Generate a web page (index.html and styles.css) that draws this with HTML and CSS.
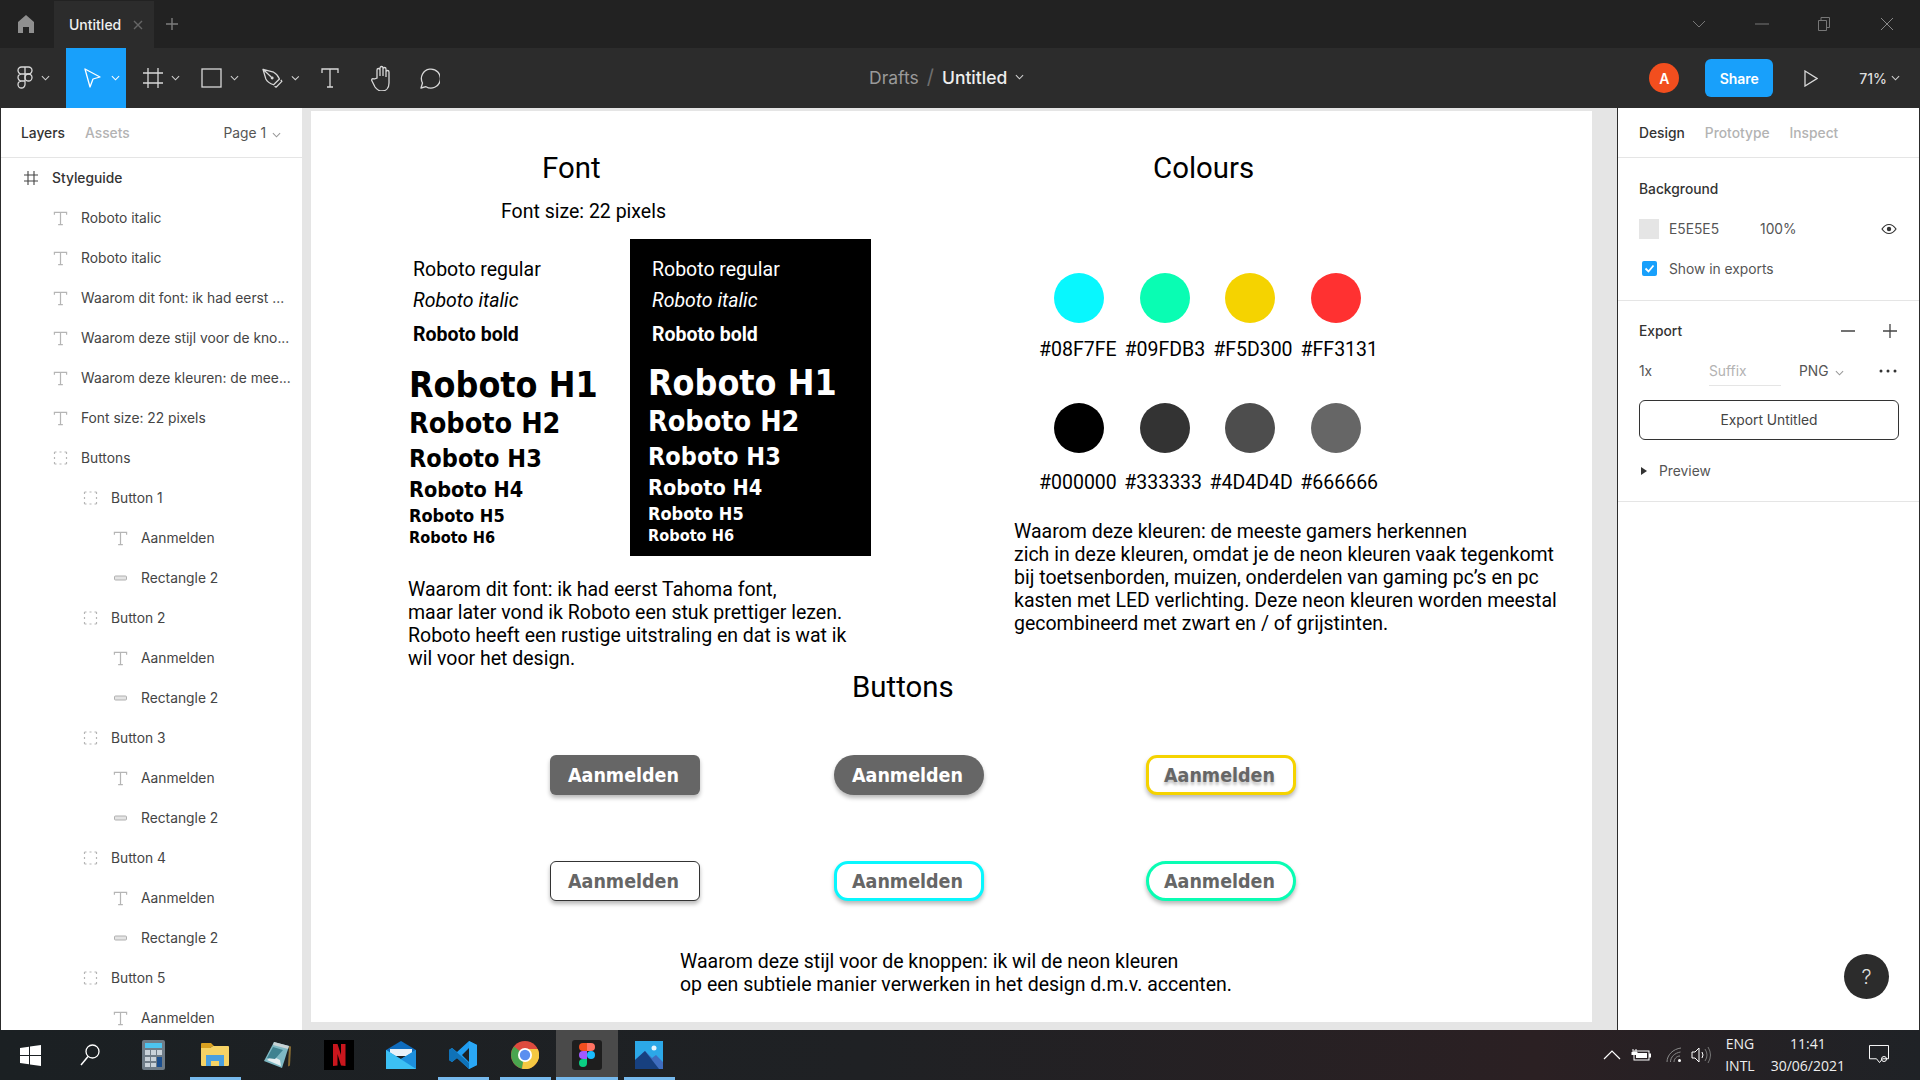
FILE: index.html
```html
<!DOCTYPE html>
<html lang="en">
<head>
    <meta charset="UTF-8">
    <title>Untitled - Figma</title>
    <link rel="stylesheet" href="styles.css">
</head>
<body>
    <svg class="defs" width="0" height="0">
        <symbol id="i-t" viewBox="0 0 16 16"><path d="M1.5 4V1.5h13V4M8 1.5v13M5.5 14.5h5" fill="none" stroke="#b5b5b5" stroke-width="1.3"/></symbol>
        <symbol id="i-group" viewBox="0 0 14 14"><path d="M1 1h2M6 1h2M11 1h2M1 13h2M6 13h2M11 13h2M1 1v2M1 6v2M1 11v2M13 1v2M13 6v2M13 11v2" fill="none" stroke="#b5b5b5" stroke-width="1.2"/></symbol>
        <symbol id="i-rect" viewBox="0 0 14 8"><rect x="1" y="2" width="12" height="4" rx="1" fill="#e4e4e4" stroke="#b0b0b0" stroke-width="1"/></symbol>
        <symbol id="i-chev" viewBox="0 0 10 6"><path d="M1 1l4 4 4-4" fill="none" stroke="currentColor" stroke-width="1.2"/></symbol>
    </svg>

    <header class="topbar">
        <svg class="home" width="18" height="20" viewBox="0 0 18 20"><path d="M9 1L1 8v11h5v-6h6v6h5V8z" fill="#8f8f8f"/></svg>
        <div class="tab">
            <span class="tab-name">Untitled</span>
            <svg width="10" height="10" viewBox="0 0 10 10"><path d="M1 1l8 8M9 1l-8 8" stroke="#666" stroke-width="1.4"/></svg>
        </div>
        <svg class="tab-add" width="14" height="14" viewBox="0 0 14 14"><path d="M7 1v12M1 7h12" stroke="#7d7d7d" stroke-width="1.4"/></svg>
        <div class="win-controls">
            <svg width="14" height="8" viewBox="0 0 14 8"><path d="M1 1l6 6 6-6" fill="none" stroke="#777" stroke-width="1"/></svg>
            <svg width="14" height="2" viewBox="0 0 14 2"><path d="M0 1h14" stroke="#777" stroke-width="1"/></svg>
            <svg width="12" height="14" viewBox="0 0 12 14"><path d="M.5 3.5h8v10h-8zM3 3.5V.5h8.500v10H8.500" fill="none" stroke="#777" stroke-width="1"/></svg>
            <svg width="14" height="14" viewBox="0 0 14 14"><path d="M1 1l12 12M13 1L1 13" stroke="#888" stroke-width="1"/></svg>
        </div>
    </header>

    <nav class="toolbar">
        <div class="tools">
            <div class="tool tool-logo">
                <svg width="16" height="24" viewBox="0 0 16 24" fill="none" stroke="#d8d8d8" stroke-width="1.3"><path d="M8 1H4.500a3.500 3.500 0 0 0 0 7H8zM8 1h3.500a3.500 3.500 0 0 1 0 7H8zM8 8H4.500a3.500 3.500 0 0 0 0 7H8zM8 15H4.500A3.500 3.500 0 1 0 8 18.500z"/><circle cx="11.500" cy="11.500" r="3.500"/></svg>
                <svg class="chev" width="9" height="6"><use href="#i-chev"/></svg>
            </div>
            <div class="tool tool-active">
                <svg width="20" height="22" viewBox="0 0 20 22"><path d="M2 2l15 8-7 2-3 8z" fill="none" stroke="#fff" stroke-width="1.3" stroke-linejoin="round"/></svg>
                <svg class="chev" width="9" height="6"><use href="#i-chev"/></svg>
            </div>
            <div class="tool tool-frame">
                <svg width="20" height="20" viewBox="0 0 20 20"><path d="M5 0v20M15 0v20M0 5h20M0 15h20" stroke="#d8d8d8" stroke-width="1.3"/></svg>
                <svg class="chev" width="9" height="6"><use href="#i-chev"/></svg>
            </div>
            <div class="tool tool-shape">
                <svg width="21" height="20" viewBox="0 0 21 20"><rect x="1" y="1" width="19" height="18" fill="none" stroke="#d8d8d8" stroke-width="1.300"/></svg>
                <svg class="chev" width="9" height="6"><use href="#i-chev"/></svg>
            </div>
            <div class="tool tool-pen">
                <svg width="22" height="20" viewBox="0 0 22 20" fill="none" stroke="#d8d8d8" stroke-width="1.300" stroke-linejoin="round"><path d="M1 1l11 3q4 2 6 7l-6 6q-6-2-8-6zM1 1l8.500 8M13 18.500l1.500 1 6-6-1-1.500"/><circle cx="10.500" cy="10" r="1.500" fill="#d8d8d8" stroke="none"/></svg>
                <svg class="chev" width="9" height="6"><use href="#i-chev"/></svg>
            </div>
            <div class="tool tool-plain tool-text">
                <svg width="18" height="20" viewBox="0 0 18 20"><path d="M1 5V1h16v4M9 1v18M6 19h6" fill="none" stroke="#d8d8d8" stroke-width="1.300"/></svg>
            </div>
            <div class="tool tool-plain tool-hand">
                <svg width="22" height="26" viewBox="0 0 22 26"><path d="M6 13V5a1.500 1.500 0 0 1 3 0v6-8a1.500 1.500 0 0 1 3 0v8-7a1.500 1.500 0 0 1 3 0v8-5a1.500 1.500 0 0 1 3 0v11c0 5-3 8-7 8-3 0-5-1-7-4l-3-6c-1-2 1-3 2-2z" fill="none" stroke="#d8d8d8" stroke-width="1.300"/></svg>
            </div>
            <div class="tool tool-plain tool-comment">
                <svg width="22" height="22" viewBox="0 0 22 22"><path d="M3 21l1.500-5A9.500 9.500 0 1 1 8 19.700z" fill="none" stroke="#d8d8d8" stroke-width="1.300" stroke-linejoin="round"/></svg>
            </div>
        </div>
        <div class="file-title">
            <span class="crumb">Drafts</span>
            <span class="crumb-sep">/</span>
            <span class="file-name">Untitled</span>
            <svg class="chev" width="9" height="6"><use href="#i-chev"/></svg>
        </div>
        <div class="actions">
            <span class="avatar">A</span>
            <span class="share">Share</span>
            <svg class="play" width="14" height="17" viewBox="0 0 14 17"><path d="M1 1l12 7.500L1 16z" fill="none" stroke="#d8d8d8" stroke-width="1.300"/></svg>
            <span class="zoom-level">71%</span>
            <svg class="chev" width="9" height="6"><use href="#i-chev"/></svg>
        </div>
    </nav>

    <main class="workspace">
        <aside class="layers">
            <div class="panel-tabs">
                <span class="tab-on">Layers</span>
                <span class="tab-off">Assets</span>
                <span class="page-pick">Page 1 <svg width="9" height="6"><use href="#i-chev"/></svg></span>
            </div>
            <div class="layer layer-frame">
                <svg width="14" height="14" viewBox="0 0 14 14"><path d="M4 0v14M10 0v14M0 4h14M0 10h14" stroke="#444" stroke-width="1.100"/></svg>
                <span>Styleguide</span>
            </div>
            <div class="layer lvl-1"><svg class="ico" width="15" height="15"><use href="#i-t"/></svg><span>Roboto italic</span></div>
            <div class="layer lvl-1"><svg class="ico" width="15" height="15"><use href="#i-t"/></svg><span>Roboto italic</span></div>
            <div class="layer lvl-1"><svg class="ico" width="15" height="15"><use href="#i-t"/></svg><span>Waarom dit font: ik had eerst ...</span></div>
            <div class="layer lvl-1"><svg class="ico" width="15" height="15"><use href="#i-t"/></svg><span>Waarom deze stijl voor de kno...</span></div>
            <div class="layer lvl-1"><svg class="ico" width="15" height="15"><use href="#i-t"/></svg><span>Waarom deze kleuren: de mee...</span></div>
            <div class="layer lvl-1"><svg class="ico" width="15" height="15"><use href="#i-t"/></svg><span>Font size: 22 pixels</span></div>
            <div class="layer lvl-1"><svg class="ico" width="14" height="14"><use href="#i-group"/></svg><span>Buttons</span></div>
            <div class="layer lvl-2"><svg class="ico" width="14" height="14"><use href="#i-group"/></svg><span>Button 1</span></div>
            <div class="layer lvl-3"><svg class="ico" width="15" height="15"><use href="#i-t"/></svg><span>Aanmelden</span></div>
            <div class="layer lvl-3"><svg class="ico" width="14" height="8"><use href="#i-rect"/></svg><span>Rectangle 2</span></div>
            <div class="layer lvl-2"><svg class="ico" width="14" height="14"><use href="#i-group"/></svg><span>Button 2</span></div>
            <div class="layer lvl-3"><svg class="ico" width="15" height="15"><use href="#i-t"/></svg><span>Aanmelden</span></div>
            <div class="layer lvl-3"><svg class="ico" width="14" height="8"><use href="#i-rect"/></svg><span>Rectangle 2</span></div>
            <div class="layer lvl-2"><svg class="ico" width="14" height="14"><use href="#i-group"/></svg><span>Button 3</span></div>
            <div class="layer lvl-3"><svg class="ico" width="15" height="15"><use href="#i-t"/></svg><span>Aanmelden</span></div>
            <div class="layer lvl-3"><svg class="ico" width="14" height="8"><use href="#i-rect"/></svg><span>Rectangle 2</span></div>
            <div class="layer lvl-2"><svg class="ico" width="14" height="14"><use href="#i-group"/></svg><span>Button 4</span></div>
            <div class="layer lvl-3"><svg class="ico" width="15" height="15"><use href="#i-t"/></svg><span>Aanmelden</span></div>
            <div class="layer lvl-3"><svg class="ico" width="14" height="8"><use href="#i-rect"/></svg><span>Rectangle 2</span></div>
            <div class="layer lvl-2"><svg class="ico" width="14" height="14"><use href="#i-group"/></svg><span>Button 5</span></div>
            <div class="layer lvl-3"><svg class="ico" width="15" height="15"><use href="#i-t"/></svg><span>Aanmelden</span></div>
        </aside>

        <section class="canvas">
            <div class="artboard">
                <div class="title title-font">Font</div>
                <div class="font-size">Font size: 22 pixels</div>

                <div class="sample sample-light">
                    <div class="s-regular">Roboto regular</div>
                    <div class="s-italic">Roboto italic</div>
                    <div class="s-bold">Roboto bold</div>
                    <div class="s-h1">Roboto H1</div>
                    <div class="s-h2">Roboto H2</div>
                    <div class="s-h3">Roboto H3</div>
                    <div class="s-h4">Roboto H4</div>
                    <div class="s-h5">Roboto H5</div>
                    <div class="s-h6">Roboto H6</div>
                </div>
                <div class="sample sample-dark">
                    <div class="s-regular">Roboto regular</div>
                    <div class="s-italic">Roboto italic</div>
                    <div class="s-bold">Roboto bold</div>
                    <div class="s-h1">Roboto H1</div>
                    <div class="s-h2">Roboto H2</div>
                    <div class="s-h3">Roboto H3</div>
                    <div class="s-h4">Roboto H4</div>
                    <div class="s-h5">Roboto H5</div>
                    <div class="s-h6">Roboto H6</div>
                </div>

                <p class="note note-font">Waarom dit font: ik had eerst Tahoma font,<br>maar later vond ik Roboto een stuk prettiger lezen.<br>Roboto heeft een rustige uitstraling en dat is wat ik<br>wil voor het design.</p>

                <div class="title title-colours">Colours</div>
                <div class="palette">
                    <div class="swatches">
                        <span class="dot dot-cyan"></span>
                        <span class="dot dot-green"></span>
                        <span class="dot dot-yellow"></span>
                        <span class="dot dot-red"></span>
                    </div>
                    <div class="hexes">
                        <span>#08F7FE</span><span>#09FDB3</span><span>#F5D300</span><span>#FF3131</span>
                    </div>
                    <div class="swatches swatches-grey">
                        <span class="dot dot-black"></span>
                        <span class="dot dot-333"></span>
                        <span class="dot dot-4d"></span>
                        <span class="dot dot-66"></span>
                    </div>
                    <div class="hexes hexes-grey">
                        <span>#000000</span><span>#333333</span><span>#4D4D4D</span><span>#666666</span>
                    </div>
                </div>

                <p class="note note-colours">Waarom deze kleuren: de meeste gamers herkennen<br>zich in deze kleuren, omdat je de neon kleuren vaak tegenkomt<br>bij toetsenborden, muizen, onderdelen van gaming pc’s en pc<br>kasten met LED verlichting. Deze neon kleuren worden meestal<br>gecombineerd met zwart en / of grijstinten.</p>

                <div class="title title-buttons">Buttons</div>
                <div class="button-grid">
                    <span class="btn btn-solid">Aanmelden</span>
                    <span class="btn btn-solid btn-round">Aanmelden</span>
                    <span class="btn btn-yellow">Aanmelden</span>
                    <span class="btn btn-line">Aanmelden</span>
                    <span class="btn btn-cyan">Aanmelden</span>
                    <span class="btn btn-mint">Aanmelden</span>
                </div>

                <p class="note note-buttons">Waarom deze stijl voor de knoppen: ik wil de neon kleuren<br>op een subtiele manier verwerken in het design d.m.v. accenten.</p>
            </div>
        </section>

        <aside class="props">
            <div class="panel-tabs">
                <span class="tab-on">Design</span>
                <span class="tab-off">Prototype</span>
                <span class="tab-off">Inspect</span>
            </div>
            <div class="prop-section prop-bg">
                <div class="prop-head">Background</div>
                <div class="prop-row bg-row">
                    <span class="bg-chip"></span>
                    <span class="bg-hex">E5E5E5</span>
                    <span class="bg-pct">100%</span>
                    <svg class="eye" width="16" height="12" viewBox="0 0 16 12"><path d="M1 6c2-3 4.500-4.500 7-4.500S13 3 15 6c-2 3-4.500 4.500-7 4.500S3 9 1 6z" fill="none" stroke="#333" stroke-width="1.200"/><circle cx="8" cy="6" r="2.200" fill="#333"/></svg>
                </div>
                <div class="prop-row check-row">
                    <svg class="check" width="15" height="15" viewBox="0 0 15 15"><rect width="15" height="15" rx="2" fill="#18a0fb"/><path d="M3.500 7.500l3 3 5-6" fill="none" stroke="#fff" stroke-width="1.800"/></svg>
                    <span>Show in exports</span>
                </div>
            </div>
            <div class="prop-section prop-export">
                <div class="prop-head export-head">
                    <span>Export</span>
                    <svg width="56" height="14" viewBox="0 0 56 14"><path d="M0 7h14M42 7h14M49 0v14" stroke="#444" stroke-width="1.300"/></svg>
                </div>
                <div class="export-row">
                    <span class="ex-scale">1x</span>
                    <span class="ex-suffix">Suffix</span>
                    <span class="ex-format">PNG <svg width="9" height="6"><use href="#i-chev"/></svg></span>
                    <svg class="ex-more" width="18" height="4" viewBox="0 0 18 4"><circle cx="2" cy="2" r="1.500" fill="#333"/><circle cx="9" cy="2" r="1.500" fill="#333"/><circle cx="16" cy="2" r="1.500" fill="#333"/></svg>
                </div>
                <div class="export-btn">Export Untitled</div>
                <div class="preview-row">
                    <svg width="6" height="8" viewBox="0 0 6 8"><path d="M0 0l6 4-6 4z" fill="#333"/></svg>
                    <span>Preview</span>
                </div>
            </div>
            <div class="help">?</div>
        </aside>
    </main>

    <footer class="taskbar">
        <div class="task task-start">
            <svg width="21" height="21" viewBox="0 0 21 21"><path d="M0 3l9-1.300V10H0zM10 1.500L21 0v10H10zM0 11h9v8.300L0 18zM10 11h11v10l-11-1.500z" fill="#fff"/></svg>
        </div>
        <div class="task task-search">
            <svg width="20" height="22" viewBox="0 0 20 22"><circle cx="12.500" cy="7.500" r="6.500" fill="none" stroke="#fff" stroke-width="1.300"/><path d="M8 12.500L1 21" stroke="#fff" stroke-width="1.500"/></svg>
        </div>
        <div class="task">
            <svg width="23" height="30" viewBox="0 0 23 30"><rect width="23" height="30" rx="2" fill="#6f7c87"/><rect x="3" y="3" width="17" height="5" fill="#4dc4ef"/><g fill="#c9d2d9"><rect x="3" y="10" width="5" height="5"/><rect x="9" y="10" width="5" height="5"/><rect x="15" y="10" width="5" height="5"/><rect x="3" y="17" width="5" height="4"/><rect x="9" y="17" width="5" height="4"/><rect x="3" y="23" width="5" height="4"/><rect x="9" y="23" width="5" height="4"/></g><rect x="15" y="17" width="5" height="10" fill="#1b4f8f"/></svg>
        </div>
        <div class="task task-open">
            <svg width="28" height="24" viewBox="0 0 28 24"><path d="M0 1q0-1 1-1h9l3 3h-1L9 5H0z" fill="#d9a020"/><path d="M0 5h9l3-2h15q1 0 1 1v18q0 1-1 1H1q-1 0-1-1z" fill="#f6d365"/><path d="M5 12h18v11h-5v-5H10v5H5z" fill="#4a9fdf"/></svg>
        </div>
        <div class="task">
            <svg width="28" height="28" viewBox="0 0 28 28"><path d="M26 5l2 .500-1 19-2 1z" fill="#8a6d34"/><path d="M11 1l15 4-7 22L1 20z" fill="#7fb9c4"/><path d="M11 1l15 4-1 3-15-4z" fill="#c8d2d4"/><path d="M4 19l14 6-1-6-8-4z" fill="#e6eef0"/><path d="M10 6l10 3-8 9-8-1z" fill="#3f8290"/></svg>
        </div>
        <div class="task">
            <svg width="30" height="30" viewBox="0 0 30 30"><rect width="30" height="30" fill="#000"/><path d="M9 4h4.500L17 15V4h4.500v22l-4.500-.5L13.500 14v11.500L9 26z" fill="#c9161d"/></svg>
        </div>
        <div class="task">
            <svg width="30" height="28" viewBox="0 0 30 28"><path d="M0 9L15 0l15 9v3H0z" fill="#0f6cbd"/><path d="M4 8h22v7H4z" fill="#e8f1f8"/><path d="M0 9l15 9 15-9v19H0z" fill="#28a8ea"/><path d="M15 18l15-9v19z" fill="#1d8fdc"/><path d="M0 28V9l30 19z" fill="#3cc0f4"/></svg>
        </div>
        <div class="task task-open">
            <svg width="30" height="30" viewBox="0 0 30 30"><path d="M21 1l8 4v20l-8 4L9 18l-5 4-3-2V10l3-2 5 4zM21 8l-7 7 7 7z" fill="#1f9cf0"/><path d="M21 1l8 4v20l-8 4z" fill="#2aa7f5"/><path d="M1 10l3-2 17 15v6L9 18l-5 4-3-2z" fill="#0f72b8"/></svg>
        </div>
        <div class="task task-open">
            <svg width="28" height="28" viewBox="0 0 28 28"><circle cx="14" cy="14" r="14" fill="#dd4b3e"/><path d="M14 14L3 5.500A14 14 0 0 0 11 27.700z" fill="#4aa54f"/><path d="M14 8h12.700A14 14 0 0 1 11 27.700z" fill="#f5c842"/><circle cx="14" cy="14" r="7" fill="#fff"/><circle cx="14" cy="14" r="5.200" fill="#5b8ff0"/></svg>
        </div>
        <div class="task task-open task-current">
            <span class="figma-tile">
                <svg width="16" height="24" viewBox="0 0 16 24"><path d="M8 0H4a4 4 0 0 0 0 8h4z" fill="#f24e1e"/><path d="M8 0h4a4 4 0 0 1 0 8H8z" fill="#ff7262"/><path d="M8 8H4a4 4 0 0 0 0 8h4z" fill="#a259ff"/><circle cx="12" cy="12" r="4" fill="#1abcfe"/><path d="M8 16H4a4 4 0 1 0 4 4z" fill="#0acf83"/></svg>
            </span>
        </div>
        <div class="task task-open">
            <svg width="28" height="28" viewBox="0 0 28 28"><rect width="28" height="28" fill="#2ca8e8"/><circle cx="19" cy="7" r="2.500" fill="#e8f6fd"/><path d="M0 28V19l10-9 7 7 4-3 7 7v7z" fill="#3f6dbf"/><path d="M0 28v-9l10-9 14 18z" fill="#17407f"/></svg>
        </div>

        <div class="tray">
            <svg width="18" height="10" viewBox="0 0 18 10"><path d="M1 9l8-8 8 8" fill="none" stroke="#fff" stroke-width="1.200"/></svg>
            <svg class="tray-battery" width="20" height="12" viewBox="0 0 20 12"><path d="M2 0v3M5 0v3" stroke="#fff"/><rect x="0.500" y="3" width="6" height="3" fill="#fff"/><rect x="3" y="2" width="15" height="9" fill="none" stroke="#fff"/><rect x="5" y="4" width="11" height="5" fill="#fff"/><rect x="18" y="4.500" width="2" height="4" fill="#fff"/></svg>
            <svg class="tray-wifi" width="16" height="16" viewBox="0 0 16 16" fill="none" stroke="#8a8a8a"><path d="M1 15C1 8 7 2 15 1M4.500 15c0-5 4-9 10-10M8 15c0-3 2.500-6 6-6"/><circle cx="13.500" cy="13.500" r="1.500" fill="#fff" stroke="none"/></svg>
            <svg class="tray-sound" width="20" height="18" viewBox="0 0 20 18" fill="none"><path d="M1 6h3l4-4v14l-4-4H1z" stroke="#fff"/><path d="M11 6q2 3 0 6" stroke="#fff"/><path d="M14 3q4 6 0 12M17 1q5 8 0 16" stroke="#777"/></svg>
            <div class="tray-text tray-lang">ENG<br>INTL</div>
            <div class="tray-text tray-clock">11:41<br>30/06/2021</div>
            <svg class="tray-notif" width="20" height="20" viewBox="0 0 20 20" fill="none" stroke="#fff"><path d="M.5.500h19v14h-6l-3 4-3-4h-7z" transform="scale(1 .95)"/><circle cx="15" cy="14" r="2.500"/></svg>
        </div>
    </footer>
</body>
</html>
```

FILE: styles.css
```css
* {
    box-sizing: border-box;
}
html, body {
    margin: 0;
    height: 100%;
}
body {
    width: 1920px;
    height: 1080px;
    overflow: hidden;
    display: flex;
    flex-direction: column;
    font-family: Inter, "Noto Sans", sans-serif;
    background: #e5e5e5;
}
.defs {
    position: absolute;
}
.chev {
    color: #d0d0d0;
}

/* top tab strip */
.topbar {
    height: 48px;
    flex: none;
    display: flex;
    align-items: center;
    background: #222;
    color: #fff;
}
.home {
    margin-left: 17px;
}
.tab {
    width: 100px;
    height: 47px;
    margin: 1px 0 0 19px;
    padding-left: 15px;
    display: flex;
    align-items: center;
    gap: 12px;
    background: #2c2c2c;
}
.tab-name {
    font-size: 14px;
    font-weight: 500;
    color: #f0f0f0;
}
.tab-add {
    margin-left: 11px;
}
.win-controls {
    margin-left: auto;
    display: grid;
    grid-template-columns: repeat(4, 62.500px);
    justify-items: center;
    align-items: center;
    padding-right: 2px;
}

/* toolbar */
.toolbar {
    height: 60px;
    flex: none;
    display: flex;
    align-items: center;
    background: #2c2c2c;
    color: #fff;
}
.tools {
    width: 869px;
    height: 60px;
    display: flex;
}
.tool {
    width: 58px;
    height: 60px;
    display: flex;
    align-items: center;
    justify-content: center;
    gap: 8px;
}
.tool-logo {
    width: 66px;
    padding-left: 1px;
}
.tool-active {
    width: 60px;
    padding-left: 10px;
    background: #18a0fb;
}
.tool-active .chev {
    color: #fff;
}
.tool-frame {
    padding-left: 12px;
}
.tool-shape {
    padding-left: 14px;
}
.tool-pen {
    padding-left: 20px;
}
.tool-plain {
    width: 50px;
}
.tool-text {
    margin-left: 5px;
}
.tool-hand {
    margin-left: 2px;
}
.tool-comment {
    margin-left: -3px;
}
.file-title {
    display: flex;
    align-items: center;
    gap: 8px;
    padding-bottom: 2px;
    font-size: 17.500px;
}
.crumb {
    color: #9a9a9a;
}
.crumb-sep {
    color: #6f6f6f;
    font-size: 20px;
}
.file-name {
    color: #eee;
    font-weight: 500;
}
.actions {
    margin-left: auto;
    display: flex;
    align-items: center;
    padding-right: 20px;
}
.avatar {
    width: 30px;
    height: 30px;
    border-radius: 50%;
    background: #f24e1e;
    display: flex;
    align-items: center;
    justify-content: center;
    font-size: 14px;
    font-weight: 600;
}
.share {
    width: 68px;
    height: 38px;
    margin-left: 26px;
    border-radius: 6px;
    background: #18a0fb;
    display: flex;
    align-items: center;
    justify-content: center;
    font-size: 14px;
    font-weight: 600;
}
.play {
    margin-left: 31px;
}
.zoom-level {
    margin-left: 41px;
    margin-right: 4px;
    font-size: 14px;
    font-weight: 500;
    color: #ddd;
}

/* main area */
.workspace {
    flex: 1;
    min-height: 0;
    display: flex;
    overflow: hidden;
}
.panel-tabs {
    height: 50px;
    padding: 0 20px;
    display: flex;
    align-items: center;
    gap: 20px;
    border-bottom: 1px solid #e5e5e5;
    font-size: 13.800px;
    font-weight: 500;
}
.tab-on {
    color: #333;
}
.tab-off {
    color: #b3b3b3;
}
.layers {
    width: 302px;
    flex: none;
    background: #fff;
    border-left: 1px solid #2c2c2c;
    overflow: hidden;
}
.page-pick {
    margin-left: auto;
    padding-right: 1px;
    color: #555;
    font-weight: 400;
}
.page-pick svg {
    color: #999;
    margin-left: 2px;
}
.layer {
    height: 40px;
    display: flex;
    align-items: center;
    font-size: 13.800px;
    color: #444;
    white-space: nowrap;
}
.layer-frame {
    padding-left: 23px;
    gap: 14px;
    font-weight: 500;
    color: #333;
}
.layer .ico {
    flex: none;
    width: 15px;
}
.lvl-1 {
    padding-left: 52px;
}
.lvl-2 {
    padding-left: 82px;
}
.lvl-3 {
    padding-left: 112px;
}
.lvl-1 .ico, .lvl-2 .ico, .lvl-3 .ico {
    margin-right: 13px;
}

/* canvas */
.canvas {
    flex: 1;
    min-width: 0;
    padding: 3px 0 0 9px;
    overflow: hidden;
    background: #e5e5e5;
}
.artboard {
    position: relative;
    width: 1281px;
    height: 911px;
    background: #fff;
    font-family: Roboto, sans-serif;
    color: #000;
    white-space: nowrap;
}
.title {
    position: absolute;
    font-size: 29.400px;
    line-height: 36px;
}
.title-font {
    left: 231px;
    top: 39px;
}
.title-colours {
    left: 842px;
    top: 39px;
}
.title-buttons {
    left: 541px;
    top: 558px;
}
.font-size {
    position: absolute;
    left: 190px;
    top: 89px;
    font-size: 19.500px;
    line-height: 24px;
}
.note {
    position: absolute;
    margin: 0;
    font-size: 19.500px;
    line-height: 23px;
}
.note-font {
    left: 97px;
    top: 467px;
}
.note-colours {
    left: 703px;
    top: 409px;
}
.note-buttons {
    left: 369px;
    top: 839px;
}

/* type samples, light one and the black card */
.sample {
    position: absolute;
}
.sample-light {
    left: 98px;
    top: 144px;
}
.sample-dark {
    left: 319px;
    top: 128px;
    width: 241px;
    height: 317px;
    padding: 16px 0 0 18px;
    background: #000;
    color: #fff;
}
.s-regular, .s-italic, .s-bold {
    padding-left: 4px;
    font-size: 19.500px;
}
.s-regular {
    line-height: 30px;
}
.s-italic {
    font-style: italic;
    line-height: 32px;
}
.s-bold {
    margin-top: 3px;
    font-weight: 700;
    line-height: 30px;
}
.s-h1, .s-h2, .s-h3, .s-h4, .s-h5, .s-h6 {
    font-family: "DejaVu Sans", sans-serif;
    font-stretch: condensed;
    font-weight: 700;
}
.s-h1 {
    margin-top: 14px;
    font-size: 35.500px;
    line-height: 42px;
}
.sample-dark .s-h1 {
    margin-top: 12px;
}
.s-h2 {
    font-size: 28.500px;
    line-height: 35px;
}
.s-h3 {
    font-size: 25px;
    line-height: 36px;
}
.s-h4 {
    font-size: 21.500px;
    line-height: 25px;
}
.s-h5 {
    font-size: 18px;
    line-height: 28px;
}
.s-h6 {
    font-size: 16.200px;
    line-height: 16px;
}

/* colour dots */
.palette {
    position: absolute;
    left: 729px;
    top: 162px;
}
.swatches {
    display: flex;
    gap: 35.500px;
    padding-left: 14px;
}
.swatches-grey {
    margin-top: 41px;
}
.dot {
    width: 50px;
    height: 50px;
    border-radius: 50%;
}
.dot-cyan { background: #08f7fe; }
.dot-green { background: #09fdb3; }
.dot-yellow { background: #f5d300; }
.dot-red { background: #ff3131; }
.dot-black { background: #000; }
.dot-333 { background: #333; }
.dot-4d { background: #4d4d4d; }
.dot-66 { background: #666; }
.hexes {
    margin-top: 15px;
    margin-left: -1px;
    display: flex;
    gap: 8px;
    font-size: 19.500px;
    line-height: 24px;
}
.hexes-grey {
    margin-top: 18px;
    gap: 7.500px;
}

/* button variants */
.button-grid {
    position: absolute;
    left: 239px;
    top: 644px;
    display: grid;
    grid-template-columns: 284px 312px 150px;
    grid-auto-rows: 40px;
    row-gap: 66px;
}
.btn {
    width: 150px;
    height: 40px;
    padding-right: 3px;
    display: flex;
    align-items: center;
    justify-content: center;
    font-family: "DejaVu Sans", sans-serif;
    font-stretch: condensed;
    font-size: 19.500px;
    font-weight: 700;
    color: #666;
    background: #fff;
    box-shadow: 0 3px 4px rgba(0,0,0,0.28);
}
.btn-solid {
    background: #666;
    color: #fff;
    border-radius: 6px;
}
.btn-round {
    border-radius: 20px;
}
.btn-yellow {
    border: 3px solid #f5d300;
    border-radius: 11px;
    text-shadow: 0 3px 3px rgba(0,0,0,0.25);
}
.btn-line {
    border: 1px solid #333;
    border-radius: 6px;
}
.btn-cyan {
    border: 3px solid #08f7fe;
    border-radius: 14px;
}
.btn-mint {
    border: 3px solid #09fdb3;
    border-radius: 20px;
}

/* right panel */
.props {
    position: relative;
    width: 303px;
    flex: none;
    background: #fff;
    border-left: 1px solid #2c2c2c;
    border-right: 1px solid #2c2c2c;
}
.props .panel-tabs {
    padding: 0 21px;
}
.prop-section {
    padding: 24px 21px 0;
    border-bottom: 1px solid #e5e5e5;
    font-size: 13.800px;
    color: #555;
}
.prop-bg {
    height: 143px;
}
.prop-head {
    height: 14px;
    line-height: 14px;
    font-weight: 500;
    color: #333;
}
.prop-row {
    display: flex;
    align-items: center;
}
.bg-row {
    height: 20px;
    margin-top: 23px;
}
.bg-chip {
    width: 20px;
    height: 20px;
    background: #e5e5e5;
}
.bg-hex {
    margin-left: 10px;
}
.bg-pct {
    margin-left: 41px;
}
.eye {
    margin-left: auto;
    margin-right: 1px;
}
.check-row {
    margin-top: 22px;
    height: 15px;
}
.check {
    margin: 0 12px 0 3px;
}
.prop-export {
    height: 201px;
    padding-top: 23px;
}
.export-head {
    display: flex;
    justify-content: space-between;
    align-items: center;
}
.export-head svg {
    margin-right: 1px;
}
.export-row {
    position: relative;
    height: 17px;
    margin-top: 24px;
    display: flex;
    align-items: center;
}
.ex-scale {
    width: 70px;
}
.ex-suffix {
    width: 90px;
    color: #b3b3b3;
}
.ex-format svg {
    margin-left: 3px;
    color: #999;
}
.ex-more {
    margin-left: auto;
    margin-right: 1px;
}
.ex-suffix::after {
    content: "";
    display: block;
    width: 72px;
    height: 1px;
    margin-top: 6px;
    margin-bottom: -7px;
    background: #e5e5e5;
}
.export-btn {
    height: 40px;
    margin-top: 21px;
    margin-right: -1px;
    border: 1px solid #333;
    border-radius: 6px;
    display: flex;
    align-items: center;
    justify-content: center;
    color: #444;
}
.preview-row {
    margin-top: 23px;
    padding-left: 2px;
    display: flex;
    align-items: center;
    gap: 12px;
}
.help {
    position: absolute;
    right: 30px;
    bottom: 31px;
    width: 45px;
    height: 45px;
    border-radius: 50%;
    background: #2c2c2c;
    color: #ddd;
    display: flex;
    align-items: center;
    justify-content: center;
    font-size: 20px;
    font-weight: 300;
}

/* windows taskbar */
.taskbar {
    height: 50px;
    flex: none;
    display: flex;
    align-items: center;
    background: linear-gradient(90deg, #1b2023 0%, #1f2124 45%, #2b2023 80%, #1f2226 100%);
    font-family: "Open Sans", "Noto Sans", sans-serif;
    color: #fff;
}
.task {
    position: relative;
    width: 62px;
    height: 50px;
    display: flex;
    align-items: center;
    justify-content: center;
}
.task-start {
    width: 60px;
}
.task-search {
    padding-right: 3px;
}
.task-open::after {
    content: "";
    position: absolute;
    left: 6px;
    right: 5px;
    bottom: 0;
    height: 3px;
    background: #76b9ed;
}
.task-current {
    background: #4a4a4a;
}
.task-current::after {
    left: 0;
    right: 0;
}
.figma-tile {
    width: 30px;
    height: 30px;
    border-radius: 3px;
    background: #1e1e1e;
    display: flex;
    align-items: center;
    justify-content: center;
}
.tray {
    margin-left: auto;
    display: flex;
    align-items: center;
    padding-right: 31px;
}
.tray-battery {
    margin-left: 10px;
}
.tray-wifi {
    margin-left: 15px;
}
.tray-sound {
    margin-left: 9px;
}
.tray-text {
    font-size: 14px;
    line-height: 22px;
    text-align: center;
    color: #eee;
}
.tray-lang {
    margin-left: 14px;
}
.tray-clock {
    margin-left: 16px;
}
.tray-notif {
    margin-left: 24px;
}
```
